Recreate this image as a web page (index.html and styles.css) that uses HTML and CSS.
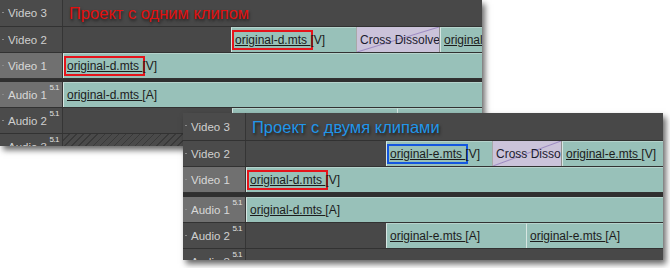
FILE: index.html
```html
<!DOCTYPE html>
<html lang="ru">
<head>
    <meta charset="UTF-8">
    <title>Проект с одним и двумя клипами</title>
    <link rel="stylesheet" href="styles.css">
</head>
<body>

    <div class="desk">

        <!-- Project with one clip -->
        <div class="panel panel-one">
            <div class="track track-top">
                <div class="head"><span class="tick"></span>Video 3</div>
                <div class="lane"><span class="title title-red">Проект с одним клипом</span></div>
            </div>
            <div class="track">
                <div class="head"><span class="tick"></span>Video 2</div>
                <div class="lane">
                    <div class="spacer" style="width:168px"></div>
                    <div class="clip" style="width:125px"><span class="name mark-red">original-d.mts </span>[V]</div>
                    <div class="dissolve" style="width:84px">Cross Dissolve</div>
                    <div class="clip grow"><span class="name">original-d.mts </span>[V]</div>
                </div>
            </div>
            <div class="track target">
                <div class="head"><span class="tick"></span>Video 1</div>
                <div class="lane">
                    <div class="clip grow"><span class="name mark-red">original-d.mts </span>[V]</div>
                </div>
            </div>
            <div class="divider"></div>
            <div class="track target">
                <div class="head"><span class="tick"></span>Audio 1<sup>5.1</sup></div>
                <div class="lane">
                    <div class="clip grow"><span class="name">original-d.mts </span>[A]</div>
                </div>
            </div>
            <div class="track">
                <div class="head"><span class="tick"></span>Audio 2<sup>5.1</sup></div>
                <div class="lane">
                    <div class="spacer" style="width:169px"></div>
                    <div class="clip" style="width:165px"></div>
                    <div class="clip grow"></div>
                </div>
            </div>
            <div class="track track-cut">
                <div class="head"><span class="tick"></span>Audio 3<sup>5.1</sup></div>
                <div class="lane hatched"></div>
            </div>
        </div>

        <!-- Project with two clips -->
        <div class="panel panel-two">
            <div class="track track-top tall">
                <div class="head"><span class="tick"></span>Video 3</div>
                <div class="lane"><span class="title title-blue">Проект с двумя клипами</span></div>
            </div>
            <div class="track">
                <div class="head"><span class="tick"></span>Video 2</div>
                <div class="lane">
                    <div class="spacer" style="width:140px"></div>
                    <div class="clip" style="width:106px"><span class="name mark-blue">original-e.mts </span>[V]</div>
                    <div class="dissolve" style="width:70px">Cross Dissolve</div>
                    <div class="clip grow"><span class="name">original-e.mts </span>[V]</div>
                </div>
            </div>
            <div class="track target">
                <div class="head"><span class="tick"></span>Video 1</div>
                <div class="lane">
                    <div class="clip grow"><span class="name mark-red">original-d.mts </span>[V]</div>
                </div>
            </div>
            <div class="divider"></div>
            <div class="track target">
                <div class="head"><span class="tick"></span>Audio 1<sup>5.1</sup></div>
                <div class="lane">
                    <div class="clip grow"><span class="name">original-d.mts </span>[A]</div>
                </div>
            </div>
            <div class="track">
                <div class="head"><span class="tick"></span>Audio 2<sup>5.1</sup></div>
                <div class="lane">
                    <div class="spacer" style="width:140px"></div>
                    <div class="clip" style="width:140px"><span class="name">original-e.mts </span>[A]</div>
                    <div class="clip grow"><span class="name">original-e.mts </span>[A]</div>
                </div>
            </div>
            <div class="track track-cut">
                <div class="head"><span class="tick"></span>Audio 3<sup>5.1</sup></div>
                <div class="lane"></div>
            </div>
        </div>

    </div>

</body>
</html>
```

FILE: styles.css
```css
body, html {
    margin: 0;
    padding: 0;
    background: #fff;
    font-family: "Liberation Sans", Arial, sans-serif;
}

.desk {
    position: relative;
    width: 670px;
    height: 268px;
    overflow: hidden;
}

/* Timeline windows */
.panel {
    position: absolute;
    display: flex;
    flex-direction: column;
    background: #484848;
    overflow: hidden;
    box-shadow: 3px 4px 6px rgba(0, 0, 0, 0.6);
}

.panel-one {
    left: 0;
    top: 0;
    width: 482px;
    height: 146px;
}

.panel-two {
    left: 183px;
    top: 113px;
    width: 480px;
    height: 147px;
}

.track {
    display: flex;
    height: 25px;
    flex-shrink: 0;
    border-bottom: 1px solid #323232;
}

.track-top {
    height: 26px;
}

.track-top.tall {
    height: 27px;
}

.track-cut {
    border-bottom: none;
}

.head {
    position: relative;
    width: 63px;
    flex-shrink: 0;
    display: flex;
    align-items: center;
    padding-left: 8px;
    box-sizing: border-box;
    background: #4b4b4b;
    border-right: 1px solid #353535;
    color: #cfcfcf;
    font-size: 11.5px;
}

.target .head {
    background: #707070;
    color: #d8d8d8;
}

.tick {
    position: absolute;
    left: 2px;
    top: 12px;
    width: 2px;
    height: 1px;
    background: #8a8a8a;
}

.head sup {
    position: absolute;
    right: 3px;
    top: 2px;
    font-size: 8px;
    line-height: 8px;
    color: #e0e0e0;
    letter-spacing: -0.5px;
}

.divider {
    height: 3px;
    flex-shrink: 0;
    background: #2f2f2f;
}

.panel-two .divider {
    height: 4px;
}

.lane {
    flex: 1;
    display: flex;
    align-items: stretch;
    background: #484848;
    min-width: 0;
}

.hatched {
    background: repeating-linear-gradient(135deg, #4a4a4a 0 4px, #393939 4px 5px);
}

/* Clips */
.spacer {
    flex-shrink: 0;
}

.clip {
    flex-shrink: 0;
    display: flex;
    align-items: center;
    padding-left: 3px;
    box-sizing: border-box;
    background: #98c1b9;
    border-left: 1px solid #d7e6e2;
    border-top: 1px solid #b5d3cc;
    color: #1c1c1c;
    font-size: 12px;
    white-space: nowrap;
    overflow: hidden;
}

.clip.grow {
    flex: 1;
    min-width: 0;
}

.name {
    text-decoration: underline;
    white-space: pre;
}

.mark-red {
    outline: 2px solid #e5141b;
    outline-offset: 1px;
}

.mark-blue {
    outline: 2px solid #1457e0;
    outline-offset: 1px;
}

.dissolve {
    flex-shrink: 0;
    display: flex;
    align-items: center;
    padding-left: 3px;
    box-sizing: border-box;
    background: linear-gradient(to bottom right, #cbc3da calc(50% - 1px), #9d8bc2 50%, #cbc3da calc(50% + 1px));
    border-left: 1px solid #a8a8a8;
    border-right: 1px solid #8f8f8f;
    color: #1b1b2e;
    font-size: 12px;
    white-space: nowrap;
    overflow: hidden;
}

/* Titles */
.title {
    align-self: center;
    margin: 0 0 0 6px;
    font-size: 16.5px;
    white-space: nowrap;
    line-height: 20px;
}

.title-red {
    color: #e2100f;
    text-shadow: 1px 2px 3px rgba(0, 0, 0, 0.6);
}

.title-blue {
    color: #2196ea;
    text-shadow: 1px 2px 3px rgba(0, 0, 0, 0.6);
}
```
